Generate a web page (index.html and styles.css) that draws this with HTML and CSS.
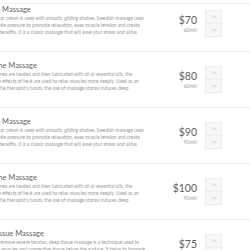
FILE: index.html
```html
<!DOCTYPE html>
<html>
<head>
<meta charset="utf-8">
<link rel="stylesheet" href="styles.css">
</head>
<body>
<div class="list">
  <div class="item first">
    <div class="info">
      <div class="title">Swedish Massage</div>
      <div class="desc">
        <div class="line">Oil or cream is used with smooth, gliding strokes. Swedish massage uses</div>
        <div class="line">gentle pressure to promote relaxation, ease muscle tension and create</div>
        <div class="line">all benefits. It is a classic massage that will ease your stress and allow</div>
      </div>
    </div>
    <div class="price"><div class="amt">$70</div><div class="dur">60min</div></div>
    <div class="qty">
      <button class="step"><svg width="6" height="4" viewBox="0 0 6 4"><polyline points="0.5,3.3 3,0.8 5.5,3.3"/></svg></button>
      <button class="step"><svg width="6" height="4" viewBox="0 0 6 4"><polyline points="0.5,0.7 3,3.2 5.5,0.7"/></svg></button>
    </div>
  </div>
  <div class="item">
    <div class="info">
      <div class="title">Hot Stone Massage</div>
      <div class="desc">
        <div class="line">Stones are heated and then lubricated with oil or essential oils, the</div>
        <div class="line">The effects of heat are used to relax muscles more deeply. Used as an</div>
        <div class="line">of the therapist's hands, the use of massage stones induces deep</div>
      </div>
    </div>
    <div class="price"><div class="amt">$80</div><div class="dur">60min</div></div>
    <div class="qty">
      <button class="step"><svg width="6" height="4" viewBox="0 0 6 4"><polyline points="0.5,3.3 3,0.8 5.5,3.3"/></svg></button>
      <button class="step"><svg width="6" height="4" viewBox="0 0 6 4"><polyline points="0.5,0.7 3,3.2 5.5,0.7"/></svg></button>
    </div>
  </div>
  <div class="item">
    <div class="info">
      <div class="title">Swedish Massage</div>
      <div class="desc">
        <div class="line">Oil or cream is used with smooth, gliding strokes. Swedish massage uses</div>
        <div class="line">gentle pressure to promote relaxation, ease muscle tension and create</div>
        <div class="line">all benefits. It is a classic massage that will ease your stress and allow</div>
      </div>
    </div>
    <div class="price"><div class="amt">$90</div><div class="dur">90min</div></div>
    <div class="qty">
      <button class="step"><svg width="6" height="4" viewBox="0 0 6 4"><polyline points="0.5,3.3 3,0.8 5.5,3.3"/></svg></button>
      <button class="step"><svg width="6" height="4" viewBox="0 0 6 4"><polyline points="0.5,0.7 3,3.2 5.5,0.7"/></svg></button>
    </div>
  </div>
  <div class="item">
    <div class="info">
      <div class="title">Hot Stone Massage</div>
      <div class="desc">
        <div class="line">Stones are heated and then lubricated with oil or essential oils, the</div>
        <div class="line">The effects of heat are used to relax muscles more deeply. Used as an</div>
        <div class="line">of the therapist's hands, the use of massage stones induces deep</div>
      </div>
    </div>
    <div class="price"><div class="amt">$100</div><div class="dur">90min</div></div>
    <div class="qty">
      <button class="step"><svg width="6" height="4" viewBox="0 0 6 4"><polyline points="0.5,3.3 3,0.8 5.5,3.3"/></svg></button>
      <button class="step"><svg width="6" height="4" viewBox="0 0 6 4"><polyline points="0.5,0.7 3,3.2 5.5,0.7"/></svg></button>
    </div>
  </div>
  <div class="item">
    <div class="info">
      <div class="title">Deep Tissue Massage</div>
      <div class="desc">
        <div class="line">To remove severe tension, deep tissue massage is a technique used to</div>
        <div class="line">the muscles and connective tissue below the surface. It helps to improve</div>
        <div class="line">circulation and relieve chronic pain and stiffness in the body</div>
      </div>
    </div>
    <div class="price"><div class="amt">$75</div><div class="dur">60min</div></div>
    <div class="qty">
      <button class="step"><svg width="6" height="4" viewBox="0 0 6 4"><polyline points="0.5,3.3 3,0.8 5.5,3.3"/></svg></button>
      <button class="step"><svg width="6" height="4" viewBox="0 0 6 4"><polyline points="0.5,0.7 3,3.2 5.5,0.7"/></svg></button>
    </div>
  </div>
</div>
</body>
</html>
```
FILE: styles.css
```css
html, body {
  margin: 0;
  padding: 0;
  background: #ffffff;
  overflow: hidden;
}
body {
  width: 250px;
  height: 250px;
  font-family: Lato, "Open Sans", sans-serif;
}
.list {
  margin-top: 3px;
  border-top: 1px solid #efefef;
}
.item {
  display: flex;
  align-items: flex-start;
  padding: 14px 28px 14px 0;
  border-bottom: 1px solid #ececec;
}
.item.first {
  padding-top: 6px;
}
.info {
  flex: 1;
  min-width: 0;
  margin-left: -27px;
  margin-top: -5px;
  overflow: hidden;
}
.title {
  font-size: 7.5px;
  line-height: 10px;
  color: #646464;
  white-space: nowrap;
}
.desc {
  margin-left: 20px;
  font-size: 4.8px;
  line-height: 7px;
  color: #9a9a9a;
}
.line {
  white-space: nowrap;
}
.price {
  width: 30px;
  margin-right: 8px;
  margin-top: 4px;
  text-align: right;
}
.amt {
  font-size: 10.5px;
  line-height: 12px;
  color: #606060;
}
.dur {
  font-size: 4.8px;
  line-height: 8px;
  color: #a0a0a0;
}
.qty {
  width: 17px;
  height: 27px;
  display: flex;
  flex-direction: column;
  box-sizing: border-box;
  border: 1px solid #ededed;
  background: #f7f7f7;
}
.step {
  flex: 1;
  display: flex;
  align-items: center;
  justify-content: center;
  padding: 0;
  margin: 0;
  border: 0;
  background: transparent;
}
.step + .step {
  border-top: 1px solid #ededed;
}
.step svg polyline {
  fill: none;
  stroke: #c4c4c4;
  stroke-width: 0.8;
}
```
